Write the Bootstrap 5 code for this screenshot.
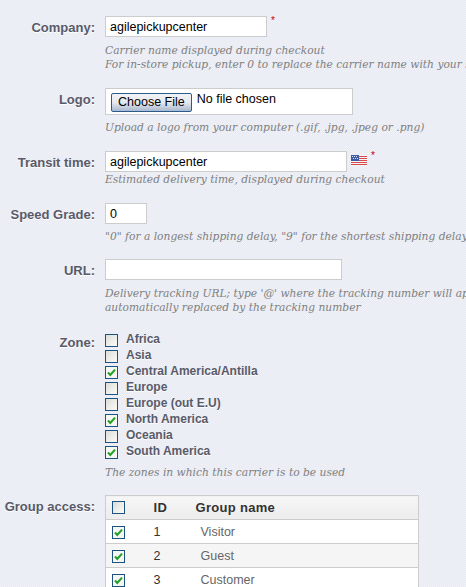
<!DOCTYPE html>
<html lang="en">
<head>
  <meta charset="UTF-8" />
  <title>Carrier</title>
  <link href="https://cdn.jsdelivr.net/npm/bootstrap@5.3.3/dist/css/bootstrap.min.css" rel="stylesheet">
  <style>
    html, body { height: 100%; overflow: hidden; }
    body {
      background: repeating-conic-gradient(#e8ebf3 0 25%, #eff1f6 0 50%) 0 0 / 2px 2px;
      font-family: "Liberation Sans", Arial, sans-serif;
      font-size: 12px;
      color: #585a69;
    }
    .carrier-form { padding-top: 16px; width: 700px; }
    .form-line { display: flex; }
    .line-label {
      width: 95px;
      margin-right: 10px;
      flex: none;
      padding-top: 1px;
      text-align: right;
      font-weight: bold;
      font-size: 13px;
      line-height: 21px;
      text-shadow: 0 1px 0 #fff;
    }
    .line-body { flex: 1; }
    .text-field {
      display: block;
      height: 21px;
      padding: 0 4px;
      border: 1px solid #ccc;
      border-radius: 0;
      background: #fff;
      color: #000;
      font-size: 12.5px;
      outline: 0;
    }
    .hint {
      margin: 0;
      font-family: "DejaVu Serif", Georgia, serif;
      font-style: italic;
      font-size: 10.7px;
      line-height: 14px;
      color: #7f7f7f;
      white-space: nowrap;
    }
    .req { color: #c00; font-size: 10px; line-height: 10px; }
    .file-box {
      width: 248px;
      height: 27px;
      padding: 3px 5px;
      border: 1px solid #ccc;
      background: #fff;
      color: #000;
      font-size: 12.5px;
      line-height: 14px;
    }
    .file-box::file-selector-button {
      height: 19px;
      margin-right: 5px;
      padding: 0 6px;
      border: 1px solid #2b5a8c;
      border-radius: 2px;
      background: linear-gradient(#f2f3f6, #e6e8ee 50%, #a9b9d0);
      color: #000;
      vertical-align: -3px;
      font: 12.5px "Liberation Sans", Arial, sans-serif;
    }
    .tick {
      appearance: none;
      display: block;
      flex: none;
      width: 13px;
      height: 13px;
      margin: 0;
      border: 1px solid #1c5180;
      background: linear-gradient(135deg, #dcdcd7, #fbfbf9);
    }
    .tick:checked {
      background: #f6f6f4 url("data:image/svg+xml,%3Csvg xmlns='http://www.w3.org/2000/svg' viewBox='0 0 11 11'%3E%3Cpath d='M2 5.5 4.3 8 9 2.6' fill='none' stroke='%2321a121' stroke-width='2'/%3E%3C/svg%3E") center / 11px 11px no-repeat;
    }
    .zone-list { font-weight: bold; font-size: 12px; line-height: 16px; text-shadow: 0 1px 0 #fff; }
    .zone-item { display: flex; height: 16px; }
    .zone-item .tick { margin-top: 3px; margin-right: 8px; }
    .group-table {
      width: 314px;
      border: 1px solid #ccc;
      border-bottom: 0;
      border-collapse: collapse;
      background: #fff;
    }
    .group-table th, .group-table td { padding: 0; height: 24px; border-bottom: 1px solid #ccc; }
    .group-table th {
      background: linear-gradient(#f6f6f6, #ececec);
      color: #333;
      font-size: 13px;
      letter-spacing: .3px;
    }
    .group-table td { font-size: 12.5px; color: #666; padding-top: 1px; }
    .group-table .odd-row td { background: #f5f5f5; }
    .col-tick { width: 48px; padding-left: 6px !important; }
    .col-id { width: 42px; }
    .name-cell { padding-left: 5px !important; }
    .col-id-cell { color: #333 !important; }
    .flag { flex: none; width: 16px; height: 11px; }
  </style>
</head>
<body>
  <form class="carrier-form">
    <div class="form-line">
      <div class="line-label">Company:</div>
      <div class="line-body">
        <div class="d-flex">
          <input class="text-field" style="width:162px" type="text" value="agilepickupcenter">
          <span class="req ms-1">*</span>
        </div>
        <p class="hint" style="margin-top:7px">Carrier name displayed during checkout</p>
        <p class="hint">For in-store pickup, enter 0 to replace the carrier name with your shop name</p>
      </div>
    </div>

    <div class="form-line" style="margin-top:16px">
      <div class="line-label">Logo:</div>
      <div class="line-body">
        <input class="file-box d-block" type="file">
        <p class="hint" style="margin-top:6px">Upload a logo from your computer (.gif, .jpg, .jpeg or .png)</p>
      </div>
    </div>

    <div class="form-line" style="margin-top:16px">
      <div class="line-label">Transit time:</div>
      <div class="line-body">
        <div class="d-flex">
          <input class="text-field" style="width:242px" type="text" value="agilepickupcenter">
          <svg class="flag ms-1 mt-1" viewBox="0 0 16 11">
            <rect width="16" height="11" fill="#f4f4f4"/>
            <path d="M0 1.5h16M0 3.5h16M0 5.5h16M0 7.5h16M0 9.5h16" stroke="#d8474a" stroke-width="1"/>
            <rect width="8" height="6" fill="#3c5aa8"/>
            <path d="M1 1.5h1M3 1.5h1M5 1.5h1M2 3.5h1M4 3.5h1M6 3.5h1" stroke="#dfe6f5" stroke-width="1"/>
          </svg>
          <span class="req ms-1">*</span>
        </div>
        <p class="hint" style="margin-top:1px">Estimated delivery time, displayed during checkout</p>
      </div>
    </div>

    <div class="form-line" style="margin-top:16px">
      <div class="line-label">Speed Grade:</div>
      <div class="line-body">
        <input class="text-field" style="width:42px" type="text" value="0">
        <p class="hint" style="margin-top:6px">"0" for a longest shipping delay, "9" for the shortest shipping delay</p>
      </div>
    </div>

    <div class="form-line" style="margin-top:15px">
      <div class="line-label">URL:</div>
      <div class="line-body">
        <input class="text-field" style="width:237px" type="text">
        <p class="hint" style="margin-top:7px">Delivery tracking URL; type '@' where the tracking number will appear, it will then be</p>
        <p class="hint">automatically replaced by the tracking number</p>
      </div>
    </div>

    <div class="form-line" style="margin-top:16px">
      <div class="line-label">Zone:</div>
      <div class="line-body">
        <div class="zone-list">
          <label class="zone-item"><input class="tick" type="checkbox">Africa</label>
          <label class="zone-item"><input class="tick" type="checkbox">Asia</label>
          <label class="zone-item"><input class="tick" type="checkbox" checked>Central America/Antilla</label>
          <label class="zone-item"><input class="tick" type="checkbox">Europe</label>
          <label class="zone-item"><input class="tick" type="checkbox">Europe (out E.U)</label>
          <label class="zone-item"><input class="tick" type="checkbox" checked>North America</label>
          <label class="zone-item"><input class="tick" type="checkbox">Oceania</label>
          <label class="zone-item"><input class="tick" type="checkbox" checked>South America</label>
        </div>
        <p class="hint" style="margin-top:7px">The zones in which this carrier is to be used</p>
      </div>
    </div>

    <div class="form-line" style="margin-top:15px">
      <div class="line-label">Group access:</div>
      <div class="line-body">
        <table class="group-table">
          <thead>
            <tr>
              <th class="col-tick"><input class="tick" type="checkbox"></th>
              <th class="col-id">ID</th>
              <th>Group name</th>
            </tr>
          </thead>
          <tbody>
            <tr>
              <td class="col-tick"><input class="tick" type="checkbox" checked></td>
              <td class="col-id-cell">1</td>
              <td class="name-cell">Visitor</td>
            </tr>
            <tr class="odd-row">
              <td class="col-tick"><input class="tick" type="checkbox" checked></td>
              <td class="col-id-cell">2</td>
              <td class="name-cell">Guest</td>
            </tr>
            <tr>
              <td class="col-tick"><input class="tick" type="checkbox" checked></td>
              <td class="col-id-cell">3</td>
              <td class="name-cell">Customer</td>
            </tr>
          </tbody>
        </table>
      </div>
    </div>
  </form>
  <script src="https://cdn.jsdelivr.net/npm/bootstrap@5.3.3/dist/js/bootstrap.bundle.min.js"></script>
</body>
</html>
